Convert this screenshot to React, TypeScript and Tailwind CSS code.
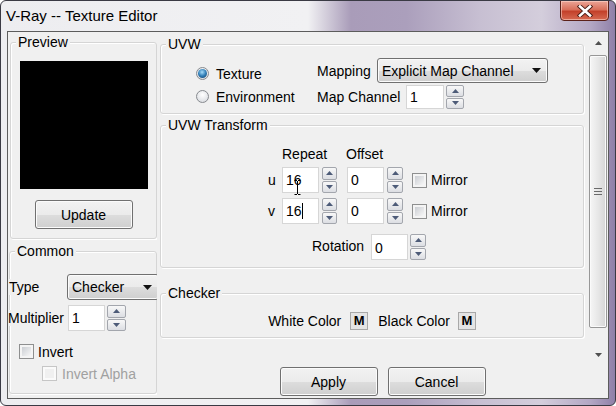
import React from "react";

function Tri({ up, color = "#4d5b78" }: { up?: boolean; color?: string }) {
  return (
    <svg width="7" height="4" viewBox="0 0 7 4" className="block">
      <path d={up ? "M0 4L3.5 0L7 4Z" : "M0 0L3.5 4L7 0Z"} fill={color} />
    </svg>
  );
}

function Spin({ className }: { className: string }) {
  const half =
    "flex-1 flex items-center justify-center border border-[#a3a6ad] rounded-[2px] bg-[linear-gradient(#f8f8f8,#dcdee3)]";
  return (
    <div className={"flex flex-col gap-[1px] shrink-0 " + className}>
      <div className={half}>
        <Tri up />
      </div>
      <div className={half}>
        <Tri />
      </div>
    </div>
  );
}

function Field({ className, children }: { className: string; children?: React.ReactNode }) {
  return (
    <div className={"relative flex items-center shrink-0 bg-white border border-[#d6d6d6] pl-[3px] " + className}>
      {children}
    </div>
  );
}

const btnBase =
  "rounded-[3px] border border-[#707070] bg-[linear-gradient(#f2f2f2_0%,#ebebeb_50%,#dddddd_51%,#cfcfcf_100%)] shadow-[inset_0_0_0_1px_#fbfbfb]";

function Combo({ className, text }: { className: string; text: string }) {
  return (
    <div className={"flex items-center justify-between shrink-0 pl-[4px] pr-[6px] " + btnBase + " " + className}>
      <span>{text}</span>
      <svg width="9" height="5" viewBox="0 0 9 5" className="block">
        <path d="M0 0H9L4.5 5Z" fill="#111" />
      </svg>
    </div>
  );
}

function Group({
  label,
  className,
  children,
}: {
  label: string;
  className: string;
  children?: React.ReactNode;
}) {
  return (
    <div className={"relative shrink-0 border border-[#d5d5d5] rounded-[3px] shadow-[inset_1px_1px_0_#ffffff,1px_1px_0_#ffffff] " + className}>
      <span className="absolute -top-[9px] left-[5px] px-[2px] bg-[#f0f0f0] leading-[16px]">{label}</span>
      {children}
    </div>
  );
}

function Radio({ checked }: { checked?: boolean }) {
  return (
    <div className="w-[13px] h-[13px] shrink-0 rounded-full border border-[#878a8f] bg-[radial-gradient(circle_at_50%_35%,#ffffff,#d3d6db)] flex items-center justify-center">
      {checked && (
        <div className="w-[9px] h-[9px] rounded-full bg-[radial-gradient(circle_at_45%_35%,#a6dcfa,#2f7db6_50%,#123a60)]" />
      )}
    </div>
  );
}

function Check({ disabled, className = "" }: { disabled?: boolean; className?: string }) {
  return (
    <div
      className={
        (disabled
          ? "w-[15px] h-[15px] shrink-0 border border-[#c6c6c6] p-[2px] bg-[#fafafa] "
          : "w-[15px] h-[15px] shrink-0 border border-[#8e8f8f] p-[2px] bg-[#f4f4f4] ") + className
      }
    >
      <div
        className={
          disabled
            ? "w-full h-full bg-[#f0f0f0]"
            : "w-full h-full bg-[linear-gradient(135deg,#cbced3,#f7f7f7)]"
        }
      />
    </div>
  );
}

function MBtn({ className }: { className: string }) {
  return (
    <div
      className={
        "w-[18px] h-[18px] shrink-0 flex items-center justify-center border border-[#a8a8a8] bg-[#e4e4e4] font-bold text-[13px] " +
        className
      }
    >
      M
    </div>
  );
}

function TransformRow({ label, children }: { label: string; children: React.ReactNode }) {
  return (
    <div className="mt-[5px] ml-[107px] flex items-center h-[26px]">
      <span className="w-[14px] shrink-0">{label}</span>
      <Field className="w-[37px] h-[26px]">{children}</Field>
      <Spin className="ml-[3px] w-[15px] h-[26px]" />
      <Field className="ml-[10px] w-[37px] h-[26px]">0</Field>
      <Spin className="ml-[3px] w-[16px] h-[26px]" />
      <Check className="ml-[9px]" />
      <span className="ml-[4px]">Mirror</span>
    </div>
  );
}

export default function App() {
  return (
    <div className="w-[616px] h-[406px] overflow-hidden flex flex-col rounded-[6px] border border-[#3a3a44] bg-[linear-gradient(90deg,#ededf0_0%,#f1f1f3_50%,#a99cb9_57%,#ab9fbc_66%,#c7bfd2_78%,#d4cedc_88%,#b3a7c4_96%,#8f80a8_100%)] font-['Liberation_Sans',Arial,sans-serif] text-[14px] leading-[16px] text-black">
      {/* title bar */}
      <div className="h-[30px] shrink-0 flex items-start justify-between">
        <div className="pl-[5px] h-full flex items-center text-[15px]">V-Ray -- Texture Editor</div>
        <div className="-mt-[1px] mr-[6px] w-[49px] h-[21px] flex items-center justify-center rounded-b-[4px] border border-[#5b2119] bg-[linear-gradient(#eba597_0%,#d9705b_45%,#c3412b_55%,#d66a52_100%)] shadow-[inset_0_0_0_1px_rgba(255,220,210,0.55)]">
          <svg width="16" height="12" viewBox="0 0 16 12" className="block">
            <path d="M3 1.5L13 10.5M13 1.5L3 10.5" stroke="#4a1d16" strokeWidth="4.4" strokeLinecap="square" />
            <path d="M3 1.5L13 10.5M13 1.5L3 10.5" stroke="#ffffff" strokeWidth="2.6" strokeLinecap="square" />
          </svg>
        </div>
      </div>

      {/* client */}
      <div className="mx-[6px] mb-[6px] flex-1 flex border border-[#5c5c5c] bg-[#f0f0f0]">
        {/* left column */}
        <div className="w-[149px] shrink-0 flex flex-col overflow-hidden">
          <Group label="Preview" className="mt-[10px] ml-[2px] w-[147px] h-[197px] flex flex-col items-center">
            <div className="mt-[18px] w-[128px] h-[128px] bg-black" />
            <div className={"mt-[11px] w-[98px] h-[29px] flex items-center justify-center " + btnBase}>Update</div>
          </Group>
          <Group label="Common" className="mt-[12px] ml-[1px] w-[148px] h-[143px] flex flex-col">
            <div className="mt-[22px] -ml-[2px] flex items-center h-[26px]">
              <span className="w-[59px] shrink-0">
                <span className="bg-[#f0f0f0] pl-[1px]">Type</span>
              </span>
              <Combo className="w-[92px] h-[26px]" text="Checker" />
            </div>
            <div className="mt-[5px] -ml-[2px] flex items-center h-[26px]">
              <span className="w-[60px] shrink-0">
                <span className="bg-[#f0f0f0]">Multiplier</span>
              </span>
              <Field className="w-[37px] h-[26px]">1</Field>
              <Spin className="ml-[2px] w-[19px] h-[26px]" />
            </div>
            <div className="mt-[13px] ml-[9px] flex items-center h-[15px]">
              <Check />
              <span className="ml-[4px]">Invert</span>
            </div>
            <div className="mt-[7px] ml-[32px] flex items-center h-[15px]">
              <Check disabled />
              <span className="ml-[5px] text-[#a0a0a0]">Invert Alpha</span>
            </div>
          </Group>
        </div>

        {/* right column */}
        <div className="flex-1 flex flex-col">
          <div className="h-[333px] shrink-0 flex">
            <div className="flex-1 flex flex-col overflow-hidden">
              <Group label="UVW" className="mt-[12px] ml-[3px] w-[424px] h-[70px] flex">
                <div className="ml-[35px] mt-[17px] w-[121px] shrink-0 flex flex-col">
                  <div className="h-[23px] flex items-center">
                    <Radio checked />
                    <span className="ml-[7px]">Texture</span>
                  </div>
                  <div className="h-[23px] flex items-center">
                    <Radio />
                    <span className="ml-[7px]">Environment</span>
                  </div>
                </div>
                <div className="mt-[13px] flex flex-col">
                  <div className="h-[25px] flex items-center">
                    <span className="w-[60px] shrink-0">Mapping</span>
                    <Combo className="w-[171px] h-[25px]" text="Explicit Map Channel" />
                  </div>
                  <div className="mt-[2px] h-[24px] flex items-center">
                    <span className="w-[89px] shrink-0">Map Channel</span>
                    <Field className="w-[38px] h-[24px]">1</Field>
                    <Spin className="ml-[2px] w-[18px] h-[24px]" />
                  </div>
                </div>
              </Group>

              <Group label="UVW Transform" className="mt-[11px] ml-[3px] w-[424px] h-[143px] flex flex-col">
                <div className="mt-[20px] ml-[121px] flex h-[16px]">
                  <span className="w-[64px]">Repeat</span>
                  <span>Offset</span>
                </div>
                <TransformRow label="u">
                  <span>16</span>
                  <svg width="7" height="15" viewBox="0 0 7 15" className="absolute left-[11px] top-[12px]">
                    <path d="M0.5 0.5H3M4 0.5H6.5M3.5 1V14M0.5 14.5H3M4 14.5H6.5" stroke="#000" strokeWidth="1" fill="none" />
                  </svg>
                </TransformRow>
                <TransformRow label="v">
                  <span>16</span>
                  <span className="inline-block w-[1px] h-[16px] bg-black" />
                </TransformRow>
                <div className="mt-[10px] ml-[151px] flex items-center h-[26px]">
                  <span className="w-[59px] shrink-0 -mt-[3px]">Rotation</span>
                  <Field className="w-[37px] h-[26px]">
                    <span className="mt-[2px]">0</span>
                  </Field>
                  <Spin className="ml-[2px] w-[16px] h-[26px]" />
                </div>
              </Group>

              <Group label="Checker" className="mt-[25px] ml-[3px] w-[424px] h-[45px] flex flex-col">
                <div className="mt-[18px] h-[18px] flex items-center justify-center">
                  <span>White Color</span>
                  <MBtn className="ml-[9px]" />
                  <span className="ml-[10px]">Black Color</span>
                  <MBtn className="ml-[8px]" />
                </div>
              </Group>
            </div>

            {/* scrollbar */}
            <div className="w-[20px] shrink-0 flex flex-col items-center bg-[#f0f0f0]">
              <div className="h-[21px] flex items-center justify-center">
                <Tri up color="#505050" />
              </div>
              <div className="mt-[2px] w-[18px] h-[273px] rounded-[2px] border border-[#979797] bg-[linear-gradient(90deg,#f6f6f6,#e7e7e7_50%,#d6d6d6)] shadow-[inset_0_0_0_1px_#fafafa] flex items-center justify-center">
                <div className="flex flex-col gap-[2px]">
                  <div className="w-[8px] h-[1px] bg-[#6a6a6a]" />
                  <div className="w-[8px] h-[1px] bg-[#6a6a6a]" />
                  <div className="w-[8px] h-[1px] bg-[#6a6a6a]" />
                </div>
              </div>
              <div className="flex-1 flex items-end pb-[8px]">
                <Tri color="#505050" />
              </div>
            </div>
          </div>

          {/* buttons */}
          <div className="flex-1 flex justify-center gap-[10px] pt-[2px]">
            <div className={"w-[98px] h-[29px] flex items-center justify-center " + btnBase}>Apply</div>
            <div className={"w-[98px] h-[29px] flex items-center justify-center " + btnBase}>Cancel</div>
          </div>
        </div>
      </div>
    </div>
  );
}
